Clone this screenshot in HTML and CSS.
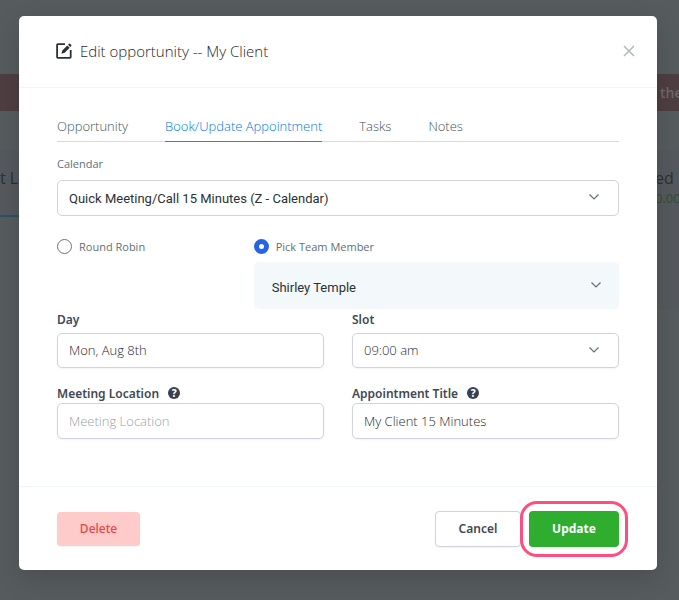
FILE: index.html
```html
<!DOCTYPE html>
<html lang="en">
<head>
  <meta charset="UTF-8" />
  <meta name="viewport" content="width=device-width, initial-scale=1.0" />
  <title>Edit opportunity</title>
  <link rel="stylesheet" href="styles.css">
</head>
<body>
  <!-- Board behind the modal -->
  <div class="board">
    <div class="alert"><span>the</span></div>
    <div class="stages">
      <div class="stage">
        <p class="stage-name">t Lo</p>
      </div>
      <div class="stage stage-closed">
        <p class="stage-name">ed</p>
        <p class="stage-total">0.00</p>
      </div>
    </div>
  </div>

  <!-- Modal -->
  <div class="overlay">
    <div class="modal" role="dialog" aria-labelledby="modalTitle">
      <div class="modal-header">
        <svg class="edit-icon" viewBox="0 0 16 16" width="16" height="16">
          <path d="M9 1.200H1.900a.8.8 0 0 0-.8.8v12a.8.8 0 0 0 .8.8h12a.8.8 0 0 0 .8-.8V7" fill="none" stroke="#2a3135" stroke-width="1.800" />
          <path d="M5.400 10.800l.9-3.400 5-5 2.400 2.400-5 5zM12 1.700l1-1a.8.8 0 0 1 1.100 0l1.200 1.200a.8.8 0 0 1 0 1.100l-1 1z" fill="#2a3135" />
        </svg>
        <h2 id="modalTitle">Edit opportunity -- My Client</h2>
        <button class="close" type="button" aria-label="Close">
          <svg viewBox="0 0 12 12" width="12" height="12"><path d="M1 1l10 10M11 1L1 11" /></svg>
        </button>
      </div>

      <form class="modal-form">
        <div class="modal-body">
          <nav class="tabs">
            <a href="#">Opportunity</a>
            <a href="#" class="active">Book/Update Appointment</a>
            <a href="#">Tasks</a>
            <a href="#">Notes</a>
          </nav>

          <label class="small-label" for="calendar">Calendar</label>
          <div class="select-wrap">
            <select id="calendar" class="control roboto">
              <option>Quick Meeting/Call 15 Minutes (Z - Calendar)</option>
            </select>
            <svg class="chevron" viewBox="0 0 10 6" width="10" height="6"><path d="M.5.5L5 5 9.500.5" /></svg>
          </div>

          <div class="assign">
            <label class="radio"><input type="radio" name="assign" /> Round Robin</label>
            <div class="pick">
              <label class="radio"><input type="radio" name="assign" checked /> Pick Team Member</label>
              <div class="select-wrap">
                <select class="control roboto member" aria-label="Team Member">
                  <option>Shirley Temple</option>
                </select>
                <svg class="chevron" viewBox="0 0 10 6" width="10" height="6"><path d="M.5.5L5 5 9.500.5" /></svg>
              </div>
            </div>
          </div>

          <div class="fields">
            <div class="field time">
              <label for="day">Day</label>
              <input id="day" class="control" type="text" value="Mon, Aug 8th" />
            </div>
            <div class="field time">
              <label for="slot">Slot</label>
              <div class="select-wrap">
                <select id="slot" class="control">
                  <option>09:00 am</option>
                </select>
                <svg class="chevron" viewBox="0 0 10 6" width="10" height="6"><path d="M.5.5L5 5 9.500.5" /></svg>
              </div>
            </div>
            <div class="field">
              <label for="location">Meeting Location <span class="help">?</span></label>
              <input id="location" class="control" type="text" placeholder="Meeting Location" />
            </div>
            <div class="field">
              <label for="apptTitle">Appointment Title <span class="help">?</span></label>
              <input id="apptTitle" class="control" type="text" value="My Client 15 Minutes" />
            </div>
          </div>
        </div>

        <div class="modal-footer">
          <button class="btn delete" type="button">Delete</button>
          <button class="btn cancel" type="button">Cancel</button>
          <button class="btn update" type="button">Update</button>
        </div>
      </form>
    </div>
  </div>
</body>
</html>
```

FILE: styles.css
```css
* { margin: 0; padding: 0; box-sizing: border-box; }
body {
  font-family: "Open Sans", "Noto Sans", sans-serif;
  font-size: 13px;
  font-weight: 300;
  color: #1f262a;
  background: #565b5e;
}

/* board */
.board {
  min-height: 100vh;
  padding-top: 74px;
  overflow: hidden;
}
.alert {
  display: flex;
  justify-content: flex-end;
  height: 37px;
  line-height: 38px;
  background: #4f3e41;
  color: #6c6869;
  font-size: 14px;
  font-weight: 600;
}
.alert span {
  width: 19px;
  white-space: nowrap;
}
.stages {
  display: flex;
  justify-content: space-between;
  margin-top: 39px;
}
.stage {
  width: 200px;
  height: 160px;
  background: #55595d;
}
.stage-name {
  height: 56px;
  line-height: 56px;
  font-size: 16px;
  font-weight: 400;
  color: #2c3033;
}
.stage:first-child {
  height: 67px;
  border-bottom: 2px solid #2b5361;
}
.stage-closed {
  width: 24px;
}
.stage-total {
  margin-top: -17px;
  font-size: 13px;
  font-weight: 400;
  text-align: right;
  color: #2d4f38;
}

/* modal */
.overlay {
  position: absolute;
  top: 0;
  left: 0;
  right: 0;
  padding: 16px 22px 30px 19px;
}
.modal {
  background: #fff;
  border-radius: 5px;
  box-shadow: 0 8px 24px rgba(0, 0, 0, 0.15);
}
.modal-header {
  display: flex;
  align-items: center;
  height: 72px;
  padding: 0 22px 2px 37px;
  border-bottom: 1px solid #f2f4f5;
}
.modal-header h2 {
  margin-left: 8px;
  font-size: 15px;
  font-weight: 300;
}
.close {
  width: 12px;
  height: 12px;
  margin-left: auto;
  border: none;
  background: none;
  cursor: pointer;
}
.close svg { display: block; }
.close path {
  stroke: #afb8bc;
  stroke-width: 1.5;
}
.modal-body {
  padding: 29px 38px 47px;
}
.tabs {
  display: flex;
  gap: 37px;
  height: 25px;
  border-bottom: 1px solid #d5dadd;
}
.tabs a {
  height: 25px;
  line-height: 18px;
  color: #42545d;
  text-decoration: none;
}
.tabs a.active {
  color: #0078ee;
  border-bottom: 1px solid #188bf6;
}
.small-label {
  display: block;
  margin: 14px 0 8px;
  line-height: 16px;
  font-size: 11px;
  font-weight: 400;
  color: #607179;
}
.select-wrap {
  position: relative;
}
.control {
  display: block;
  width: 100%;
  height: 36px;
  padding: 0 11px;
  border: 1px solid #d1d3dc;
  border-radius: 5px;
  background: #fff;
  color: #1f2933;
  font-family: inherit;
  font-size: 13px;
  font-weight: 300;
  box-shadow: 0 1px 2px rgba(0, 0, 0, 0.05);
  appearance: none;
}
.control::placeholder {
  color: #98a3a8;
}
.roboto {
  font-family: Roboto, sans-serif;
  font-weight: 400;
  color: #2a3135;
  box-shadow: none;
}
.chevron {
  position: absolute;
  top: 14px;
  right: 20px;
  pointer-events: none;
}
.chevron path {
  fill: none;
  stroke: #607179;
  stroke-width: 1.2;
}
.assign {
  display: flex;
  margin-top: 22px;
}
.assign > .radio {
  width: 35%;
}
.pick {
  flex: 1;
}
.radio {
  display: flex;
  align-items: center;
  gap: 7px;
  height: 16px;
  font-size: 11px;
  font-weight: 400;
  color: #607179;
}
.radio input {
  width: 15px;
  height: 15px;
  border: 1px solid #6b7280;
  border-radius: 50%;
  background: #fff;
  appearance: none;
}
.radio input:checked {
  border: 5px solid #2563eb;
}
.pick .select-wrap {
  margin-top: 8px;
}
.member {
  height: 47px;
  padding: 3px 18px 0;
  border: none;
  background: #f3f8fb;
}
.member + .chevron {
  top: 20px;
  right: 18px;
}
.fields {
  display: grid;
  grid-template-columns: 1fr 1fr;
  gap: 15px 28px;
  margin-top: 1px;
}
.field label {
  display: flex;
  align-items: center;
  height: 18px;
  margin-bottom: 1px;
  font-family: "Noto Sans", sans-serif;
  font-size: 12px;
  font-weight: 600;
  color: #3f4854;
}
.field.time label {
  margin-bottom: 5px;
}
.time .control {
  height: 35px;
  margin-bottom: 1px;
  padding-bottom: 2px;
}
.help {
  width: 12px;
  height: 12px;
  margin-left: 9px;
  border-radius: 50%;
  background: #374151;
  color: #fff;
  font-size: 10px;
  font-weight: 800;
  line-height: 12px;
  text-align: center;
}
.modal-footer {
  display: flex;
  align-items: center;
  height: 84px;
  padding: 0 38px;
  border-top: 1px solid #eff6fa;
}
.btn {
  width: 86px;
  height: 36px;
  border: none;
  border-radius: 4px;
  font-family: "Noto Sans", sans-serif;
  font-size: 12px;
  font-weight: 600;
  box-shadow: 0 1px 2px rgba(0, 0, 0, 0.05);
  cursor: pointer;
}
.delete {
  width: 83px;
  height: 34px;
  margin-right: auto;
  background: #fecaca;
  color: #ef4444;
  font-weight: 500;
}
.cancel {
  margin-right: 8px;
  border: 1px solid #d1d3dc;
  background: #fff;
  color: #3f4854;
}
.update {
  position: relative;
  width: 90px;
  background: #2fad2f;
  color: #fff;
  font-weight: 700;
}
/* highlight ring */
.update::after {
  content: "";
  position: absolute;
  inset: -10px -9px;
  border: 3px solid #ff4d7d;
  border-radius: 17px;
}
```
